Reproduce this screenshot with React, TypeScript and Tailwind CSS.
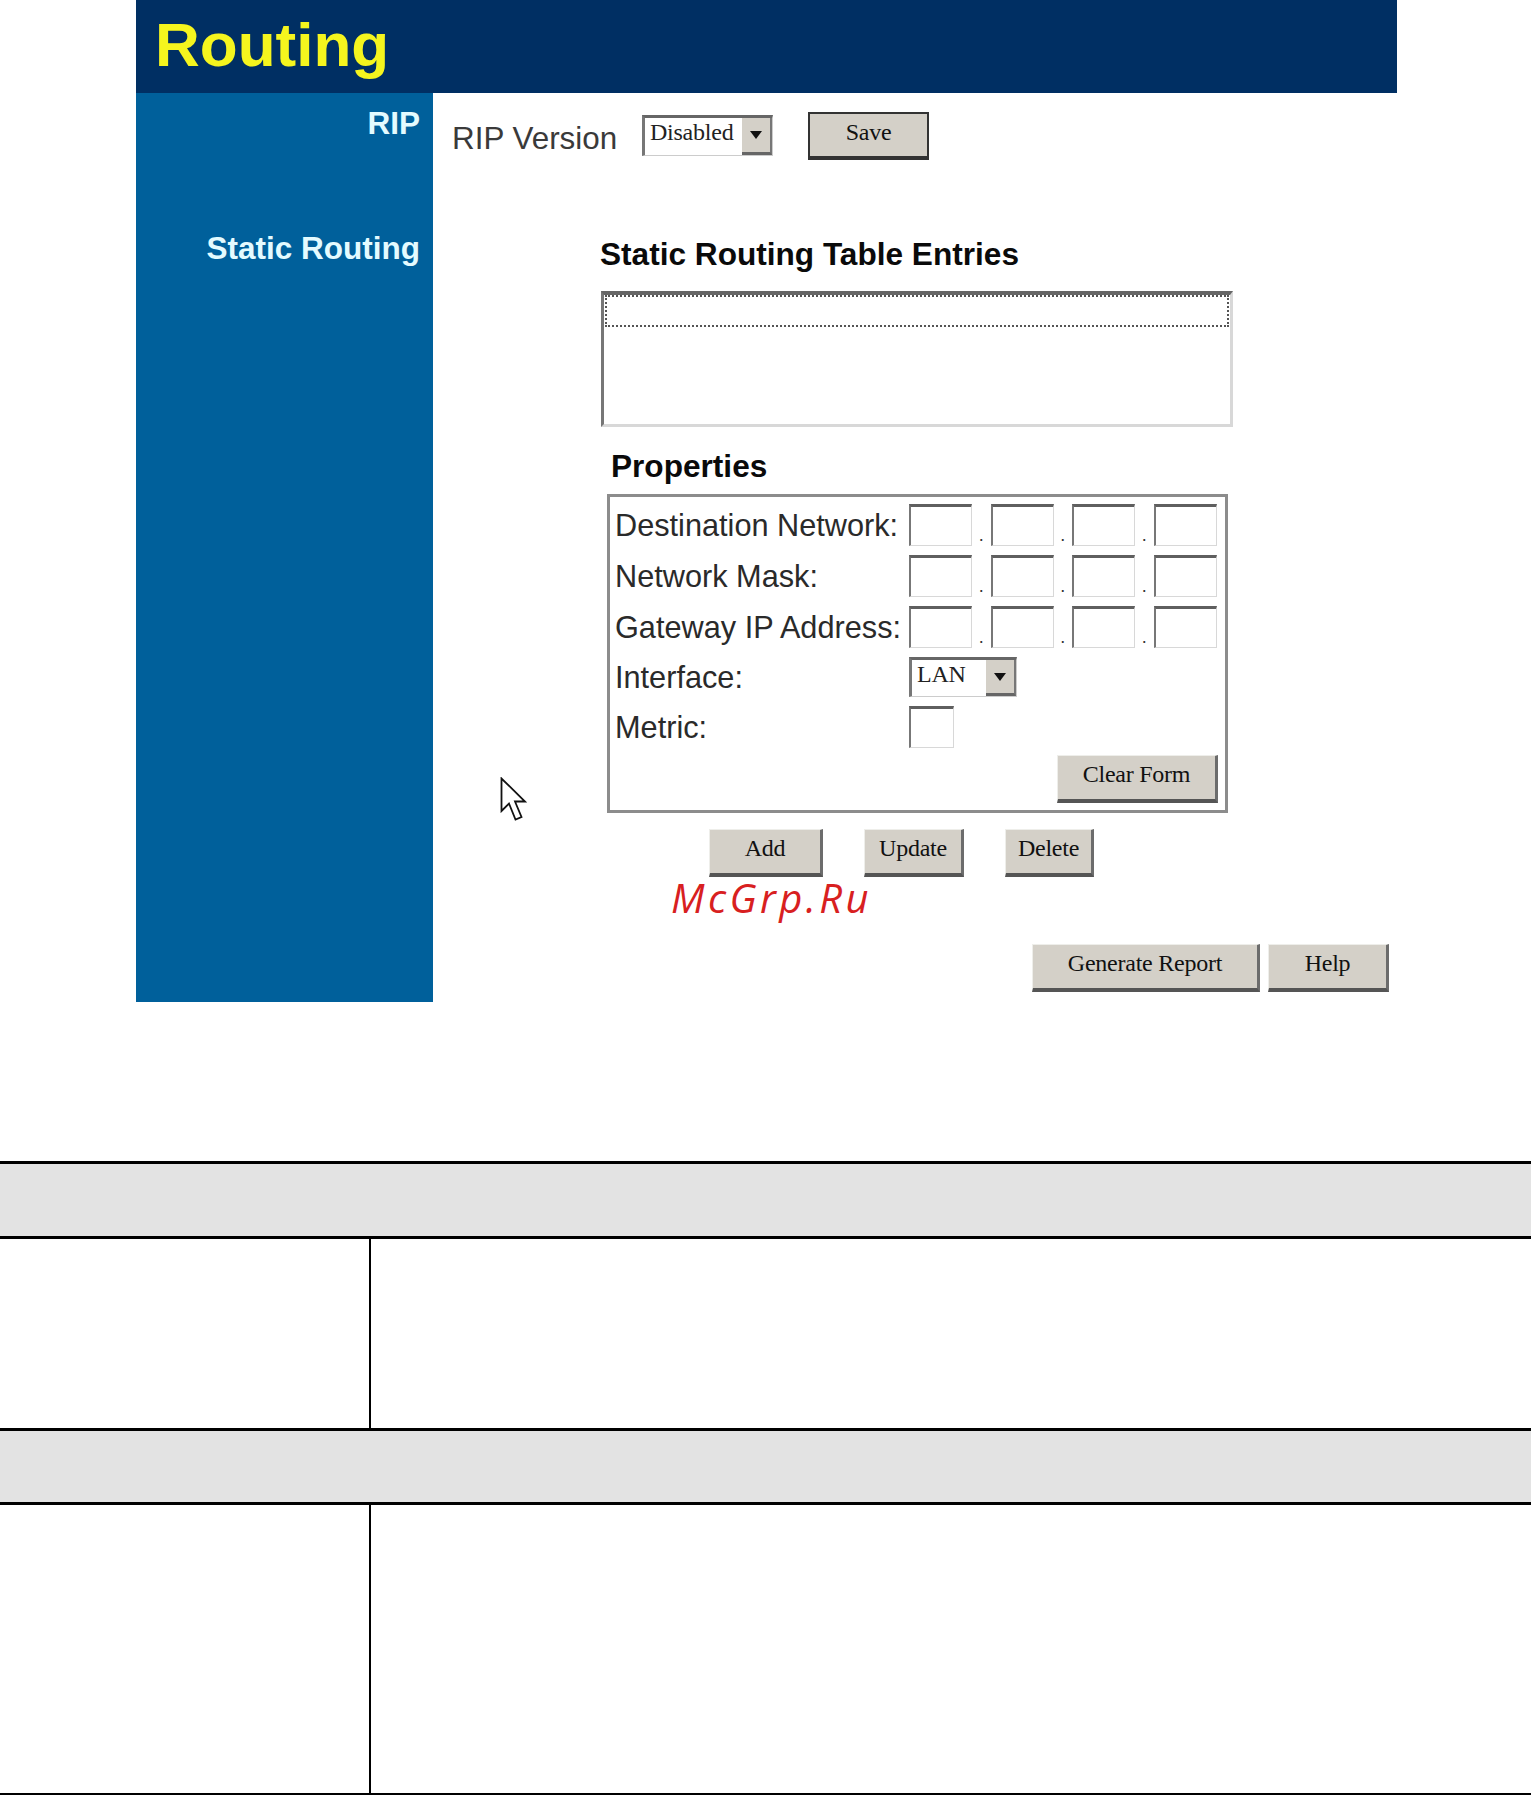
import type { ReactNode } from "react";

const sans = "font-['Liberation_Sans',Arial,sans-serif]";
const serif = "font-['Liberation_Serif','Times_New_Roman',serif]";

function WinButton({
  children,
  className = "",
  focused = false,
}: {
  children: ReactNode;
  className?: string;
  focused?: boolean;
}) {
  return (
    <button
      className={`h-[48px] shrink-0 bg-[#d4d0c8] pb-[8px] text-[24px] tracking-[-0.01em] text-[#111] ${serif} ${
        focused
          ? "border-[2px] border-b-[4px] border-[#333]"
          : "border-t-[1px] border-l-[1px] border-r-[3px] border-b-[4px] border-t-[#eeeeea] border-l-[#eeeeea] border-r-[#6c6c6c] border-b-[#555555]"
      } ${className}`}
    >
      {children}
    </button>
  );
}

function FakeSelect({ value, className = "" }: { value: string; className?: string }) {
  return (
    <div
      className={`flex shrink-0 items-stretch border-t-[3px] border-l-[3px] border-r-[1px] border-b-[1px] border-t-[#666] border-l-[#777] border-r-[#ccc] border-b-[#ccc] bg-white ${className}`}
    >
      <span className={`flex-1 pl-[5px] text-[24px] leading-[28px] tracking-[-0.01em] text-[#222] ${serif}`}>{value}</span>
      <span className="flex w-[30px] items-center justify-center border-b-[3px] border-r-[2px] border-b-[#666] border-r-[#777] bg-[#d4d0c8]">
        <svg width="12" height="8" viewBox="0 0 12 8">
          <path d="M0 0h12L6 8z" fill="#111" />
        </svg>
      </span>
    </div>
  );
}

function TextBox({ className = "w-[63px]" }: { className?: string }) {
  return (
    <input
      type="text"
      className={`box-border h-[42px] shrink-0 border-t-[3px] border-l-[2px] border-r-[1px] border-b-[1px] border-t-[#5f5f5f] border-l-[#777] border-r-[#d8d8d8] border-b-[#d8d8d8] bg-white ${className}`}
    />
  );
}

function FieldLabel({ children }: { children: ReactNode }) {
  return (
    <span className={`w-[294px] shrink-0 pt-[3px] whitespace-nowrap text-[30.7px] text-[#2a2a2a] ${sans}`}>
      {children}
    </span>
  );
}

function IpRow({ label }: { label: string }) {
  return (
    <div className="flex h-[42px] items-center">
      <FieldLabel>{label}</FieldLabel>
      {[0, 1, 2, 3].map((i) => (
        <div key={i} className="flex items-end">
          {i > 0 && (
            <span className={`w-[18.5px] text-center text-[18px] leading-[22px] text-[#333] ${sans}`}>.</span>
          )}
          <TextBox />
        </div>
      ))}
    </div>
  );
}

function TableRow({ height }: { height: string }) {
  return (
    <div className={`flex border-t-[3px] border-black ${height}`}>
      <div className="w-[371px] shrink-0 border-r-[2px] border-black" />
      <div className="flex-1" />
    </div>
  );
}

export default function App() {
  return (
    <div className="relative h-[1795px] w-[1531px] overflow-hidden bg-white">
      <div className="ml-[136px] w-[1261px]">
        <header className="flex h-[93px] items-center bg-[#002f63] pb-[4px] pl-[19px]">
          <h1 className={`text-[62px] leading-[89px] font-bold text-[#f5f51e] ${sans}`}>Routing</h1>
        </header>

        <div className="flex h-[909px]">
          <aside
            className={`flex w-[297px] shrink-0 flex-col items-end bg-[#00609b] pt-[11px] pr-[13px] text-[31.5px] leading-[38px] font-bold text-[#e4fbff] ${sans}`}
          >
            <a>RIP</a>
            <a className="mt-[87px]">Static Routing</a>
          </aside>

          <main className="flex-1 pt-[19px]">
            <div className="flex h-[48px] items-start pl-[19px]">
              <span className={`mt-[9px] w-[190px] text-[31.4px] leading-[36px] text-[#3a3a3a] ${sans}`}>RIP Version</span>
              <FakeSelect value="Disabled" className="mt-[3px] h-[41px] w-[131px]" />
              <WinButton focused className="ml-[35px] w-[121px]">
                Save
              </WinButton>
            </div>

            <h2 className={`mt-[76px] ml-[167px] text-[31.6px] leading-[36px] font-bold text-[#0a0a0a] ${sans}`}>
              Static Routing Table Entries
            </h2>

            <div className="mt-[19px] ml-[168px] h-[136px] w-[632px] border-t-[4px] border-l-[3px] border-r-[3px] border-b-[3px] border-t-[#666] border-l-[#777] border-r-[#d8d8d8] border-b-[#d8d8d8] bg-white pr-[1px] pl-[1px]">
              <div className="h-[32px] border-[2px] border-dotted border-[#555]" />
            </div>

            <h2 className={`mt-[21px] ml-[178px] text-[31.6px] leading-[36px] font-bold text-[#0a0a0a] ${sans}`}>
              Properties
            </h2>

            <fieldset className="mt-[10px] ml-[174px] flex h-[319px] w-[621px] flex-col gap-[9px] border-[3px] border-[#8c8c8c] pt-[7px] pr-[7px] pl-[5px]">
              <IpRow label="Destination Network:" />
              <IpRow label="Network Mask:" />
              <IpRow label="Gateway IP Address:" />
              <div className="flex h-[40px] items-center">
                <FieldLabel>Interface:</FieldLabel>
                <FakeSelect value="LAN" className="h-[40px] w-[108px]" />
              </div>
              <div className="flex h-[42px] items-center">
                <FieldLabel>Metric:</FieldLabel>
                <TextBox className="w-[45px]" />
              </div>
              <WinButton className="-mt-[2px] w-[161px] self-end">Clear Form</WinButton>
            </fieldset>

            <div className="mt-[16px] ml-[276px] flex">
              <WinButton className="w-[114px]">Add</WinButton>
              <WinButton className="ml-[41px] w-[100px]">Update</WinButton>
              <WinButton className="ml-[41px] w-[89px]">Delete</WinButton>
            </div>

            <div className="mt-[67px] flex justify-end gap-[8px] pr-[8px]">
              <WinButton className="w-[228px]">Generate Report</WinButton>
              <WinButton className="w-[121px]">Help</WinButton>
            </div>
          </main>
        </div>
      </div>

      <div className="mt-[159px]">
        <div className="h-[75px] border-t-[3px] border-black bg-[#e3e3e3]" />
        <TableRow height="h-[192px]" />
        <div className="h-[74px] border-t-[3px] border-black bg-[#e3e3e3]" />
        <TableRow height="h-[291px]" />
        <div className="border-t-[2px] border-black" />
      </div>

      {/* mouse pointer left in the screenshot */}
      <svg className="absolute top-[777px] left-[500px]" width="28" height="45" viewBox="0 0 28 45">
        <path d="M1.5 1.5V34l7.5-7.5 6.5 16 6-2.5-6.5-15.5H25z" fill="#fff" stroke="#111" strokeWidth="1.8" />
      </svg>

      {/* watermark */}
      <span className="absolute top-[871px] left-[671px] font-['Open_Sans',sans-serif] text-[40px] leading-[54px] font-medium tracking-[0.085em] text-[#d8201f] italic">
        McGrp.Ru
      </span>
    </div>
  );
}
